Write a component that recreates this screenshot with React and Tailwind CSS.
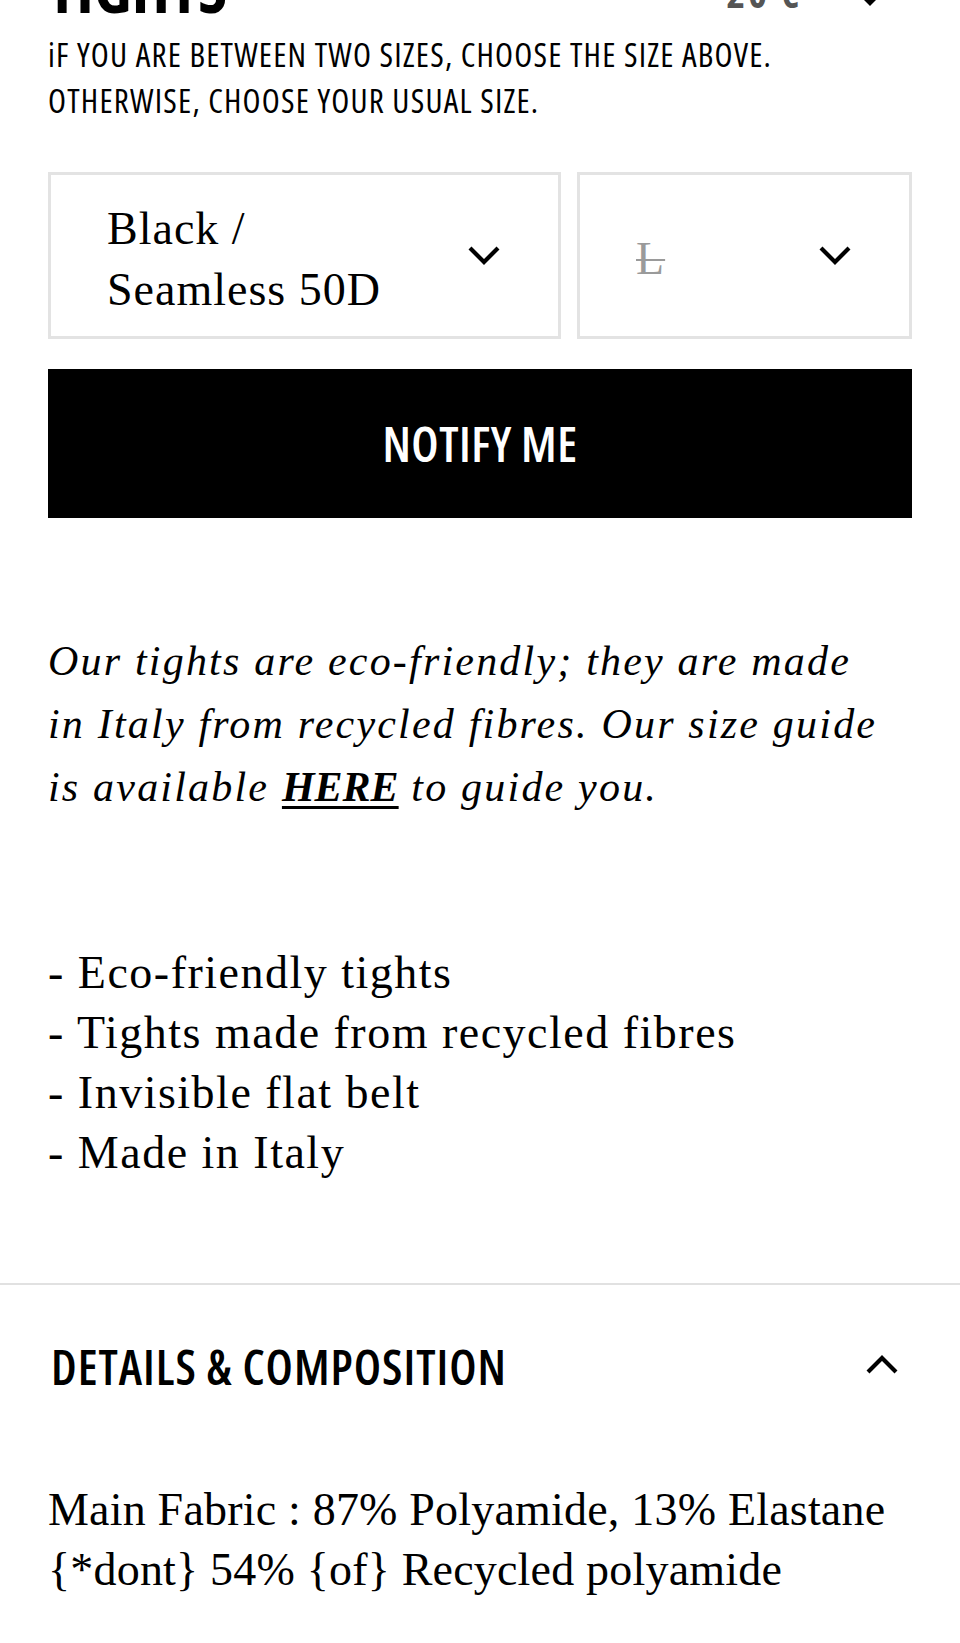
import React from 'react';

const narrow = "font-['Open_Sans','DejaVu_Sans_Condensed',sans-serif] [font-stretch:75%]";
const serif = "font-['Liberation_Serif','DejaVu_Serif',serif]";

function Chevron({ up = false, className = '' }) {
  return (
    <svg viewBox="0 0 32 19" className={className} fill="none">
      <polyline
        points={up ? '2,17 16,3 30,17' : '2,2 16,16 30,2'}
        stroke="#000"
        strokeWidth="4.2"
      />
    </svg>
  );
}

function SelectBox({ children, className = '' }) {
  return (
    <div
      className={`flex items-center justify-between border-[3px] border-[#e3e3e3] h-[167px] pl-[56px] pr-[58px] ${className}`}
    >
      <div className={`${serif} text-[46px] leading-[61px] tracking-[1px] text-black pt-[6px]`}>
        {children}
      </div>
      <Chevron className="w-[32px] h-[19px] shrink-0" />
    </div>
  );
}

export default function App() {
  return (
    <div className="bg-white min-h-screen overflow-hidden text-black">
      <div className="px-12 -mt-[34px]">
        {/* Product header (scrolled mostly out of view) */}
        <div className="flex justify-between items-start h-[55px]">
          <h1 className={`${narrow} text-[66px] leading-none font-bold uppercase -mt-[12px]`}>
            Tights
          </h1>
          <div className="flex items-start gap-[52px] pr-[26px]">
            <span className={`${narrow} text-[40px] leading-none font-bold tracking-[3px] text-[#555] mt-[7px]`}>
              20 €
            </span>
            <Chevron className="w-[32px] h-[19px] mt-[21px]" />
          </div>
        </div>

        {/* Size hint */}
        <p className={`${narrow} text-[33px] leading-[46px] tracking-[1.2px] mt-[11px]`}>
          iF YOU ARE BETWEEN TWO SIZES, CHOOSE THE SIZE ABOVE.
          <br />
          OTHERWISE, CHOOSE YOUR USUAL SIZE.
        </p>

        {/* Variant selectors */}
        <div className="grid grid-cols-[513px_1fr] gap-[16px] mt-[48px]">
          <SelectBox>
            Black /
            <br />
            Seamless 50D
          </SelectBox>
          <SelectBox>
            <span className="text-[#9a9a9a] line-through decoration-[2px]">L</span>
          </SelectBox>
        </div>

        {/* Notify button */}
        <button
          type="button"
          className={`w-full h-[149px] mt-[30px] bg-black text-white flex items-center justify-center ${narrow} text-[48px] leading-none font-semibold tracking-[0.5px]`}
        >
          NOTIFY ME
        </button>

        {/* Description */}
        <p className={`${serif} italic text-[42px] leading-[63px] tracking-[2.2px] mt-[112px]`}>
          Our tights are eco-friendly; they are made
          <br />
          in Italy from recycled fibres. Our size guide
          <br />
          is available{' '}
          <a href="#" className="font-bold underline decoration-[3px] underline-offset-[5px] tracking-[0px]">
            HERE
          </a>{' '}
          to guide you.
        </p>

        {/* Features */}
        <ul className={`${serif} text-[46px] leading-[60px] tracking-[1.5px] mt-[124px]`}>
          <li>- Eco-friendly tights</li>
          <li>- Tights made from recycled fibres</li>
          <li>- Invisible flat belt</li>
          <li>- Made in Italy</li>
        </ul>
      </div>

      {/* Details & composition */}
      <section className="border-t-2 border-[#e1e1e1] mt-[100px] px-12 pt-[58px]">
        <div className="flex justify-between items-start">
          <h2 className={`${narrow} text-[48px] leading-none font-semibold tracking-[1px] pl-[3px]`}>
            DETAILS &amp; COMPOSITION
          </h2>
          <Chevron up className="w-[32px] h-[19px] mt-[12px] mr-[14px]" />
        </div>
        <p className={`${serif} text-[46px] leading-[60px] tracking-[0.2px] mt-[89px]`}>
          Main Fabric : 87% Polyamide, 13% Elastane
          <br />
          {'{*dont} 54% {of} Recycled polyamide'}
        </p>
      </section>
    </div>
  );
}
